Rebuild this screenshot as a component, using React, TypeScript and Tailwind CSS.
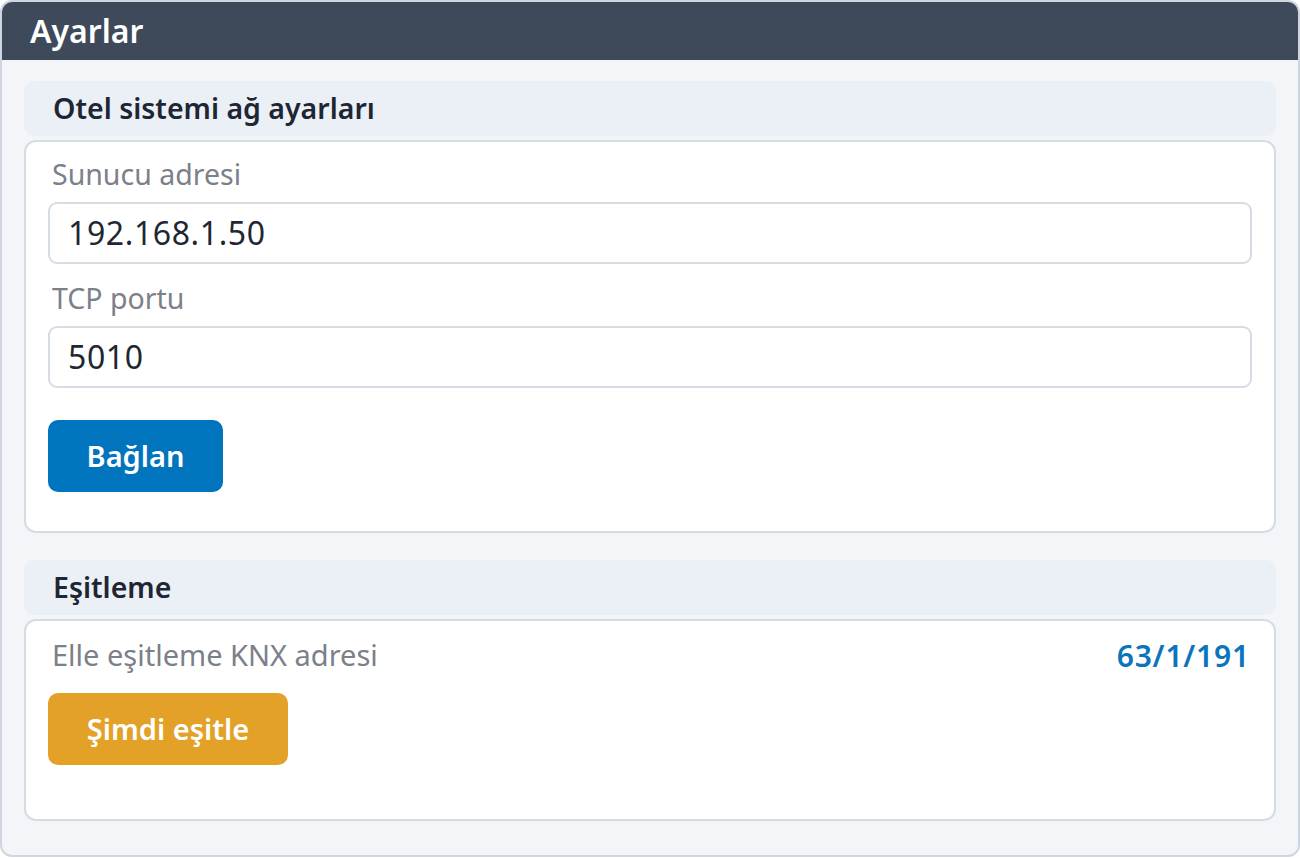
import React from "react";

const font = { fontFamily: '"Noto Sans", "Open Sans", sans-serif' };

function SectionHeader({ title }: { title: string }) {
  return (
    <div className="h-[55px] rounded-[10px] bg-[#eaf0f6] px-[29px] flex items-center">
      <h2 className="text-[28.5px] font-semibold text-[#1e2633] leading-none">{title}</h2>
    </div>
  );
}

function Field({ label, value }: { label: string; value: string }) {
  return (
    <div className="flex flex-col">
      <label className="h-[32px] leading-[32px] pl-[4px] text-[28.5px] text-[#7b8089]">{label}</label>
      <div className="mt-[12px] h-[62px] rounded-[9px] border-2 border-[#d6dce4] bg-white flex items-center px-[18px]">
        <span className="text-[32px] text-[#1f2733] tracking-[0.6px]">{value}</span>
      </div>
    </div>
  );
}

export default function App() {
  return (
    <div style={font} className="w-[1300px] h-[858px] bg-white">
      <div className="h-[857px] rounded-[12px] border-2 border-[#cfd6df] bg-[#f3f5f8] overflow-hidden flex flex-col">
        <div className="h-[58px] bg-[#3e4a5a] flex items-center px-[28px]">
          <h1 className="text-[32px] font-semibold text-white leading-none">Ayarlar</h1>
        </div>
        <div className="px-[22px] pt-[21px] flex flex-col">
          <SectionHeader title="Otel sistemi ağ ayarları" />
          <div className="mt-[4px] h-[393px] rounded-[12px] border-2 border-[#d6dce4] bg-white px-[22px] pt-[16px] flex flex-col">
            <Field label="Sunucu adresi" value="192.168.1.50" />
            <div className="mt-[18px]">
              <Field label="TCP portu" value="5010" />
            </div>
            <button className="mt-[32px] w-[175px] h-[72px] rounded-[10px] bg-[#0074bd] text-white text-[29px] font-semibold">
              Bağlan
            </button>
          </div>

          <div className="mt-[27px]">
            <SectionHeader title="Eşitleme" />
          </div>
          <div className="mt-[4px] h-[202px] rounded-[12px] border-2 border-[#d6dce4] bg-white px-[22px] pt-[18px] flex flex-col">
            <div className="h-[32px] flex items-center justify-between">
              <span className="pl-[4px] text-[29px] text-[#7b8089]">Elle eşitleme KNX adresi</span>
              <span className="pr-[2px] text-[30px] font-semibold text-[#0a74bc] tracking-[0.8px]">63/1/191</span>
            </div>
            <button className="mt-[22px] w-[240px] h-[72px] rounded-[10px] bg-[#e3a227] text-white text-[29px] font-semibold">
              Şimdi eşitle
            </button>
          </div>
        </div>
      </div>
    </div>
  );
}
